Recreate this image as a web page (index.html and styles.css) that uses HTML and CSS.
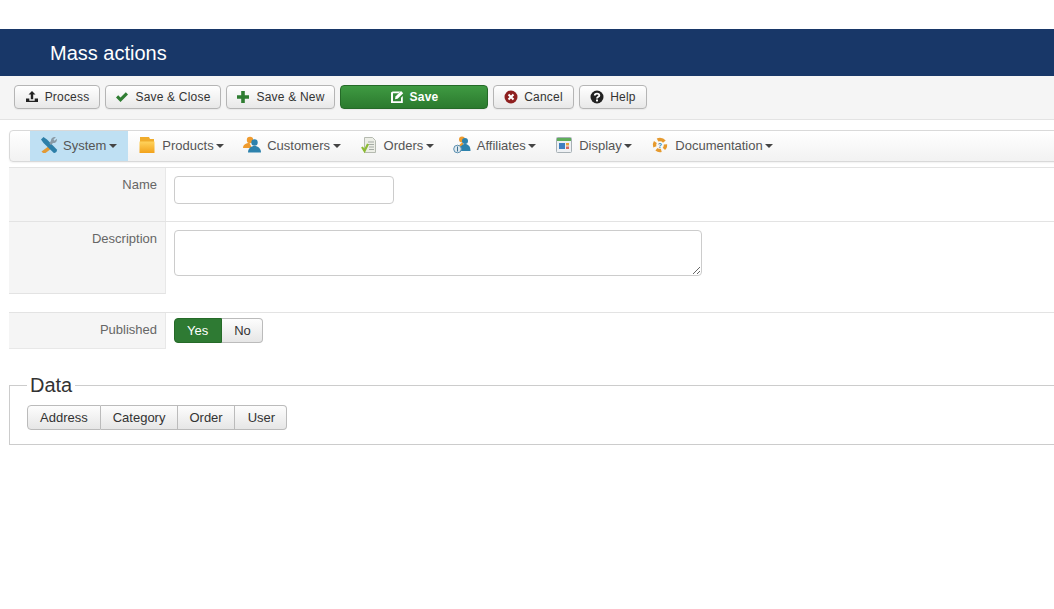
FILE: index.html
```html
<!DOCTYPE html>
<html lang="en">
<head>
<meta charset="utf-8">
<title>Mass actions</title>
<link rel="stylesheet" href="styles.css">
</head>
<body>
<header class="title-bar"><h1 class="title">Mass actions</h1></header>
<div class="toolbar">
  <button class="btn btn-process"><svg class="ico" viewBox="0 0 14 14"><path fill="#222" d="M7 1 10.500 4.500H8.200v4.700H5.800V4.500H3.500zM1 8.500h3.300v2.200h5.400V8.500H13v3.600H1z"/></svg>Process</button>
  <button class="btn btn-close"><svg class="ico" viewBox="0 0 14 14"><path fill="#2f7d32" d="M1 7.400 3.200 5.200 5.500 7.500 10.800 2.200 13 4.400 5.500 11.900z"/></svg>Save &amp; Close</button>
  <button class="btn btn-new"><svg class="ico" viewBox="0 0 14 14"><path fill="#2f7d32" d="M5.200 1h3.600v4.200H13v3.600H8.800V13H5.200V8.800H1V5.200h4.200z"/></svg>Save &amp; New</button>
  <button class="btn btn-save"><svg class="ico" viewBox="0 0 14 14"><path fill="#fff" d="M2.600 1.500h7.600L8.400 3.300H3v8h8V7.800l1.800-1.800v7H1V2.500z"/><path fill="#fff" d="M11 1 13.200 3.200 7.600 8.800 5 9.300 5.500 6.600z"/></svg>Save</button>
  <button class="btn btn-cancel"><svg class="ico" viewBox="0 0 14 14"><circle cx="7" cy="7" r="6.500" fill="#8e1f1f"/><path stroke="#fff" stroke-width="2" d="M4.500 4.500l5 5m0-5-5 5"/></svg>Cancel</button>
  <button class="btn btn-help"><svg class="ico" viewBox="0 0 14 14"><circle cx="7" cy="7" r="6.500" fill="#222"/><path fill="none" stroke="#fff" stroke-width="1.900" d="M4.800 5.500C4.800 3 9.300 3 9.300 5.400 9.300 6.900 7 6.800 7 8.600"/><rect x="6" y="9.500" width="2" height="1.900" fill="#fff"/></svg>Help</button>
</div>
<nav class="menu">
  <a class="menu-item active"><svg class="mi" viewBox="0 0 18 18"><path fill="#e29a35" d="M11 8.500 13.500 11 5.500 17 3 17 1.500 15.500z"/><path fill="#2d7fa8" d="M1 3.500 3.500 1 7 3.500 16.800 13.600C17.600 15.500 15.500 17.600 13.600 16.800L3.500 7z"/><path fill="#8a9aa5" d="M11 4.500C11 2 13.500.5 15.800 1.200L13.500 3.500 14.500 4.800 16.800 2.800C17.500 5 15.500 7.500 13 7L11 9 9.500 7.500z"/></svg>System<i class="caret"></i></a>
  <a class="menu-item"><svg class="mi" viewBox="0 0 18 18"><defs><linearGradient id="box" x1="0" y1="0" x2="0" y2="1"><stop offset="0" stop-color="#ffd35c"/><stop offset="1" stop-color="#f2a21b"/></linearGradient></defs><path fill="#f0ac2c" d="M2 1h9l1 2h4v3H2z"/><path fill="url(#box)" d="M1.500 5.500h15V17h-15z"/></svg>Products<i class="caret"></i></a>
  <a class="menu-item"><svg class="mi" viewBox="0 0 18 18"><circle cx="7" cy="4" r="3.200" fill="#ef9b2e"/><path fill="#ef9b2e" d="M0 12c0-3.500 3-5 6.500-5l2.500 5z"/><circle cx="11.500" cy="6.500" r="3.200" fill="#2d82ad"/><path fill="#2d82ad" d="M5 16.500c0-4 3-6.500 6.500-6.500s6.500 2.500 6.500 6.500z"/></svg>Customers<i class="caret"></i></a>
  <a class="menu-item"><svg class="mi" viewBox="0 0 18 18"><path fill="#eceee6" stroke="#b5bab0" d="M4.500 1.500h8l3 3v12h-11z"/><path stroke="#a5aba5" d="M8 6h6M8 8.500h6M9 11h5M9 13.500h5"/><path fill="none" stroke="#8cbb35" stroke-width="2.200" d="M2 11l2.500 4 3.500-7"/></svg>Orders<i class="caret"></i></a>
  <a class="menu-item"><svg class="mi" viewBox="0 0 18 18"><circle cx="9" cy="3.500" r="3" fill="#ef9b2e"/><path fill="#ef9b2e" d="M6 12c0-3 1-5 4-5v5z"/><circle cx="12" cy="5" r="3" fill="#2d82ad"/><path fill="#2d82ad" d="M7 15c0-5 2-7 5-7s5.500 2 5.500 7z"/><circle cx="4.500" cy="13" r="3.800" fill="#dfe9ef" stroke="#5a8fb0"/><path stroke="#3a6f90" d="M4.500 10.500v5"/></svg>Affiliates<i class="caret"></i></a>
  <a class="menu-item"><svg class="mi" viewBox="0 0 18 18"><rect x="1.500" y="1.500" width="15" height="15" rx="1" fill="#eef1f4" stroke="#a7b0b5"/><rect x="2" y="2" width="14" height="3" fill="#5fae5a"/><rect x="4" y="7" width="6" height="6" fill="#3f7fc0"/><rect x="11" y="7" width="3" height="2.500" fill="#e8a33a"/><rect x="11" y="10.500" width="3" height="2.500" fill="#d9695f"/></svg>Display<i class="caret"></i></a>
  <a class="menu-item"><svg class="mi" viewBox="0 0 18 18"><path fill="none" stroke="#e69a2e" stroke-width="3.400" stroke-dasharray="5 2.900" d="M9 3.500a5.500 5.500 0 1 1-.01 0z"/><text class="mi-q" x="9" y="11.500">?</text></svg>Documentation<i class="caret"></i></a>
</nav>
<form class="form">
  <div class="row row-name">
    <label class="lab">Name</label>
    <div class="ctl"><input class="input" type="text"></div>
  </div>
  <div class="row row-desc">
    <label class="lab">Description</label>
    <div class="ctl"><textarea class="area"></textarea></div>
  </div>
  <div class="row row-pub">
    <label class="lab">Published</label>
    <div class="ctl">
      <div class="group"><span class="seg seg-yes">Yes</span><span class="seg seg-no">No</span></div>
    </div>
  </div>
  <fieldset class="data">
    <legend class="legend">Data</legend>
    <div class="group"><span class="seg">Address</span><span class="seg">Category</span><span class="seg seg-order">Order</span><span class="seg seg-user">User</span></div>
  </fieldset>
</form>
</body>
</html>
```

FILE: styles.css
```css
* { box-sizing: border-box; }
html, body { margin: 0; padding: 0; height: 100%; overflow: hidden; }
body {
  background: #fff;
  color: #333;
  font-family: "Liberation Sans", Arial, sans-serif;
  font-size: 13px;
  padding-top: 29px;
}
.title-bar {
  background: #183768;
  height: 47px;
  padding-left: 50px;
  display: flex;
  align-items: center;
}
.title {
  margin: 0;
  color: #fff;
  font-size: 20px;
  font-weight: 400;
  line-height: 24px;
}
.toolbar {
  height: 44px;
  background: #f5f5f5;
  border-bottom: 1px solid #e3e3e3;
  padding: 9px 0 0 14px;
  display: flex;
  align-items: flex-start;
  gap: 5px;
}
.btn {
  height: 24px;
  padding: 0;
  border: 1px solid #b5b5b5;
  border-radius: 4px;
  background: linear-gradient(#ffffff, #e8e8e8);
  color: #333;
  font: 12px "Liberation Sans", Arial, sans-serif;
  letter-spacing: .2px;
  white-space: nowrap;
  display: flex;
  align-items: center;
  justify-content: center;
  gap: 6px;
  box-shadow: 0 1px 1px rgba(0,0,0,.05);
}
.ico { width: 14px; height: 14px; flex: none; }
.btn-process { width: 86px; }
.btn-close { width: 116px; }
.btn-new { width: 109px; }
.btn-save {
  width: 148px;
  background: linear-gradient(#3f9a42, #2b7a2e);
  border-color: #256a28;
  color: #fff;
  font-weight: 700;
}
.btn-cancel { width: 81px; }
.btn-help { width: 68px; }
.menu {
  margin: 10px -10px 0 9px;
  height: 32px;
  border: 1px solid #d9d9d9;
  border-radius: 4px;
  background: linear-gradient(#ffffff, #f2f2f2);
  padding: 0 0 2px 20px;
  display: flex;
  box-shadow: 0 1px 2px rgba(0,0,0,.06);
}
.menu-item {
  display: flex;
  align-items: center;
  padding: 0 9px 0 10px;
  color: #555;
  font-size: 13px;
  white-space: nowrap;
}
.menu-item.active {
  background: #bfe0f3;
  margin-bottom: -2px;
  padding-right: 11px;
  padding-bottom: 2px;
}
.menu-item.active .mi { margin-right: 5px; }
.menu-item.active .caret { margin-left: 3px; }
.mi { width: 18px; height: 18px; margin-right: 6px; flex: none; }
.mi-q { font-size: 7px; fill: #2d82ad; text-anchor: middle; font-weight: 700; }
.caret {
  width: 0;
  height: 0;
  margin-left: 2.5px;
  margin-top: 2px;
  border-left: 4px solid transparent;
  border-right: 4px solid transparent;
  border-top: 4px solid #444;
}
.form { margin: 5px -10px 0 9px; }
.row {
  display: flex;
  border-top: 1px solid #e3e3e3;
}
.lab {
  width: 157px;
  flex: none;
  background: #f5f5f5;
  border-right: 1px solid #e8e8e8;
  color: #666;
  text-align: right;
  padding: 9px 8px 0 0;
  font-size: 13px;
  line-height: 15px;
}
.ctl { padding: 8px 0 0 8px; flex: 1; }
.row-name { height: 54px; }
.row-desc { height: 73px; }
.row-desc .lab { border-bottom: 1px solid #e3e3e3; }
.row-pub { height: 37px; margin-top: 18px; }
.row-pub .lab { border-bottom: 1px solid #e8e8e8; }
.row-pub .ctl { padding-top: 5px; }
.input {
  display: block;
  width: 220px;
  height: 28px;
  border: 1px solid #ccc;
  border-radius: 4px;
  background: #fff;
}
.area {
  display: block;
  width: 528px;
  height: 46px;
  border: 1px solid #ccc;
  border-radius: 4px;
  background: #fff;
  margin: 0;
}
.group { display: inline-flex; }
.seg {
  height: 25px;
  padding: 0 12px;
  border: 1px solid #bbb;
  border-left-width: 0;
  background: linear-gradient(#fdfdfd, #e6e6e6);
  color: #333;
  font-size: 13px;
  line-height: 23px;
}
.seg:first-child { border-left-width: 1px; border-radius: 4px 0 0 4px; }
.seg:last-child { border-radius: 0 4px 4px 0; }
.seg-yes {
  background: #2e7a33;
  border-color: #256a28;
  color: #fff;
  padding-right: 13px;
}
.seg-no { padding-right: 11px; }
.seg-order { padding: 0 11px; }
.seg-user { padding: 0 11px 0 13px; }
.data {
  margin: 24px 0 0;
  padding: 8px 0 0 17px;
  height: 72px;
  min-width: 0;
  border: 1px solid #ccc;
  border-right: 0;
}
.legend {
  padding: 0 3px;
  font-size: 20px;
  line-height: 24px;
  color: #333;
}
```
